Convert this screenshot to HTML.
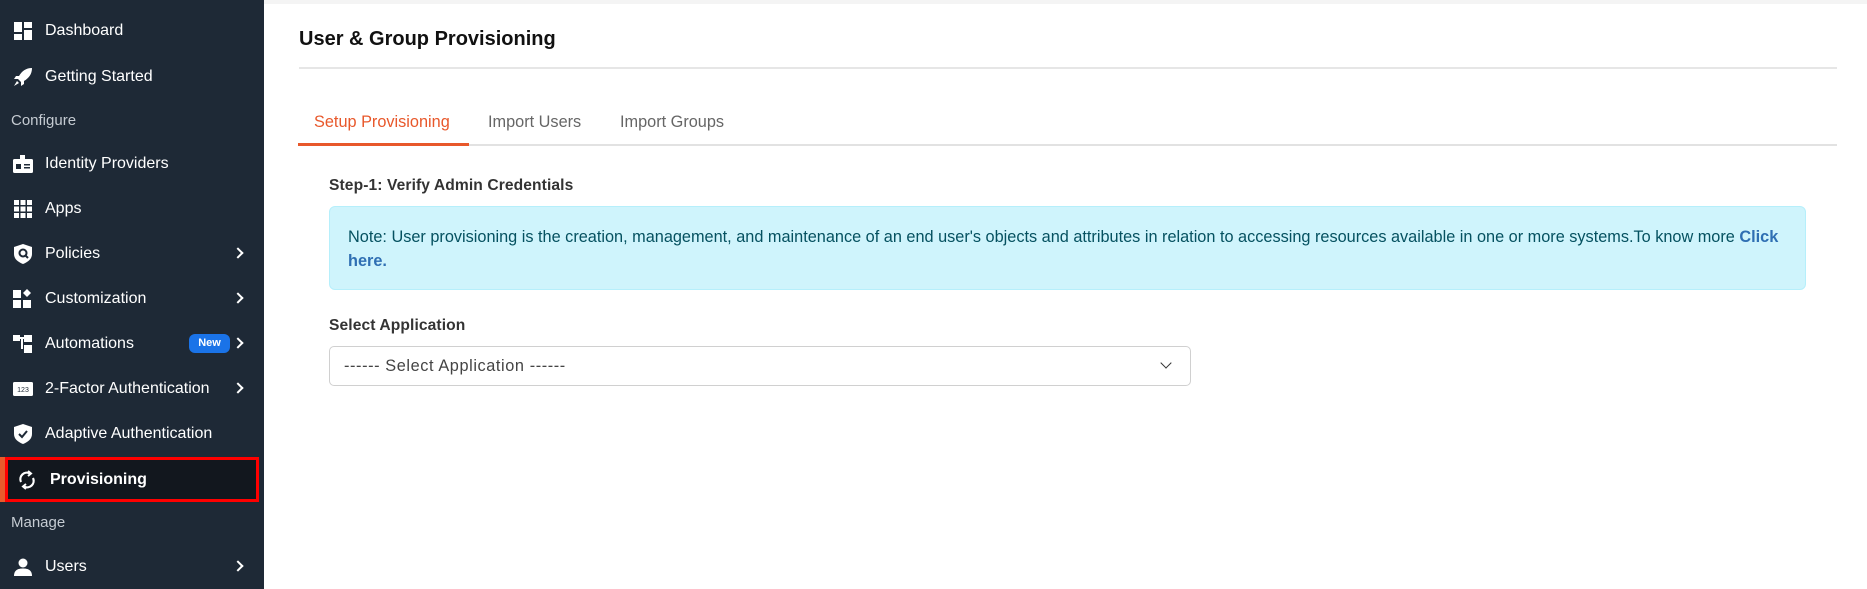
<!DOCTYPE html>
<html><head><meta charset="utf-8"><style>
*{margin:0;padding:0;box-sizing:border-box}
body{width:1867px;height:589px;overflow:hidden;background:#fff;font-family:"Liberation Sans",sans-serif;position:relative}
.sb{position:absolute;left:0;top:0;width:264px;height:589px;background:#1e2936}
.it{position:absolute;left:0;width:264px;height:45px;display:flex;align-items:center;color:#fff;font-size:16px}
.it .ic{position:absolute;left:13px;width:20px;height:20px;display:flex;align-items:center;justify-content:center}
.it .tx{position:absolute;left:45px}
.it .ch{position:absolute;left:234px;border-right:2.5px solid #fff;border-top:2.5px solid #fff;transform:rotate(45deg);width:8px;height:8px;top:18px}
.sec{position:absolute;left:11px;color:#c5cbd2;font-size:15px}
.main{position:absolute;left:264px;top:0;right:0;height:589px}
</style></head><body>
<div class="sb">
 <div class="it" style="top:8px"><span class="ic"><svg width="18" height="18" viewBox="0 0 18 18" fill="#fff"><rect x="0" y="0" width="8" height="10"/><rect x="10" y="0" width="8" height="6"/><rect x="0" y="12" width="8" height="6"/><rect x="10" y="8" width="8" height="10"/></svg></span><span class="tx">Dashboard</span></div>
 <div class="it" style="top:54px"><span class="ic"><svg width="20" height="20" viewBox="0 0 20 20" fill="#fff"><path d="M19 1C13 1 9 4 6 9L3 9 1 12 5 12 8 15 8 19 11 17 11 14C16 11 19 7 19 1Z"/><path d="M4 14 1 19 6 16Z"/></svg></span><span class="tx">Getting Started</span></div>
 <div class="sec" style="top:112px">Configure</div>
 <div class="it" style="top:141px"><span class="ic"><svg width="20" height="20" viewBox="0 0 20 20"><rect x="0" y="5" width="20" height="14" rx="1.5" fill="#fff"/><rect x="7" y="1" width="5" height="6" fill="#fff"/><rect x="3" y="10" width="5" height="5" fill="#1e2936"/><rect x="11" y="10" width="6" height="1.5" fill="#1e2936"/><rect x="11" y="13" width="6" height="1.5" fill="#1e2936"/></svg></span><span class="tx">Identity Providers</span></div>
 <div class="it" style="top:186px"><span class="ic"><svg width="18" height="18" viewBox="0 0 18 18" fill="#fff"><rect x="0" y="0" width="5" height="5"/><rect x="6.5" y="0" width="5" height="5"/><rect x="13" y="0" width="5" height="5"/><rect x="0" y="6.5" width="5" height="5"/><rect x="6.5" y="6.5" width="5" height="5"/><rect x="13" y="6.5" width="5" height="5"/><rect x="0" y="13" width="5" height="5"/><rect x="6.5" y="13" width="5" height="5"/><rect x="13" y="13" width="5" height="5"/></svg></span><span class="tx">Apps</span></div>
 <div class="it" style="top:231px"><span class="ic"><svg width="18" height="20" viewBox="0 0 18 20"><path d="M9 0 18 3V10C18 15 14 18 9 20 4 18 0 15 0 10V3Z" fill="#fff"/><circle cx="9" cy="9" r="3.5" fill="none" stroke="#1e2936" stroke-width="2"/><path d="M11 11 14 14" stroke="#1e2936" stroke-width="2"/></svg></span><span class="tx">Policies</span><span class="ch"></span></div>
 <div class="it" style="top:276px"><span class="ic"><svg width="20" height="20" viewBox="0 0 20 20" fill="#fff"><rect x="0" y="1" width="8" height="8"/><rect x="0" y="11" width="8" height="8"/><rect x="10" y="11" width="8" height="8"/><path d="M14 0 18 4 14 8 10 4Z"/></svg></span><span class="tx">Customization</span><span class="ch"></span></div>
 <div class="it" style="top:321px"><span class="ic"><svg width="20" height="20" viewBox="0 0 20 20" fill="#fff"><rect x="0" y="1" width="7" height="6"/><rect x="11" y="1" width="8" height="7"/><rect x="11" y="11" width="8" height="8"/><rect x="6" y="3" width="6" height="2"/><rect x="8" y="3" width="2" height="12"/></svg></span><span class="tx">Automations</span><span style="position:absolute;left:189px;top:13px;width:41px;height:19px;background:#1a73e8;border-radius:6px;color:#fff;font-size:11px;font-weight:bold;text-align:center;line-height:19px">New</span><span class="ch"></span></div>
 <div class="it" style="top:366px"><span class="ic"><svg width="20" height="16" viewBox="0 0 20 16"><rect x="0" y="1" width="20" height="14" rx="1.5" fill="#fff"/><text x="10" y="11" font-size="7" text-anchor="middle" fill="#1e2936" font-family="Liberation Sans">123</text></svg></span><span class="tx">2-Factor Authentication</span><span class="ch"></span></div>
 <div class="it" style="top:411px"><span class="ic"><svg width="18" height="20" viewBox="0 0 18 20"><path d="M9 0 18 3V10C18 15 14 18 9 20 4 18 0 15 0 10V3Z" fill="#fff"/><path d="M5 10 8 13 13 7" fill="none" stroke="#1e2936" stroke-width="2"/></svg></span><span class="tx">Adaptive Authentication</span></div>
 <div style="position:absolute;left:0;top:457px;width:5px;height:45px;background:#ea5a2b"></div>
 <div style="position:absolute;left:5px;top:457px;width:254px;height:45px;background:#12171e;border:3px solid #f00"></div>
 <div class="it" style="top:457px"><span class="ic" style="left:17px"><svg width="18" height="20" viewBox="0 0 18 20" fill="none" stroke="#fff" stroke-width="2.2"><path d="M3 12A6.5 6.5 0 0 1 12 3.5"/><path d="M15 8A6.5 6.5 0 0 1 6 16.5"/><path d="M10 1 13 3.5 10 6" stroke-width="2"/><path d="M8 14 5 16.5 8 19" stroke-width="2"/></svg></span><span class="tx" style="left:50px;font-weight:bold">Provisioning</span></div>
 <div class="sec" style="top:514px">Manage</div>
 <div class="it" style="top:544px"><span class="ic"><svg width="18" height="18" viewBox="0 0 18 18" fill="#fff"><circle cx="9" cy="5" r="4.5"/><path d="M0 18C0 12 4 10.5 9 10.5S18 12 18 18Z"/></svg></span><span class="tx">Users</span><span class="ch"></span></div>
</div>
<div class="main">
 <div style="position:absolute;left:0;top:0;right:0;height:4px;background:#f4f4f4"></div>
 <div style="position:absolute;left:35px;top:28px;font-size:20px;font-weight:bold;color:#111">User &amp; Group Provisioning</div>
 <div style="position:absolute;left:35px;top:67px;width:1538px;height:2px;background:#e6e6e6"></div>
 <div style="position:absolute;left:50px;top:113px;font-size:16.3px;color:#e8582b">Setup Provisioning</div>
 <div style="position:absolute;left:224px;top:113px;font-size:16.3px;color:#666">Import Users</div>
 <div style="position:absolute;left:356px;top:113px;font-size:16.3px;color:#666">Import Groups</div>
 <div style="position:absolute;left:34px;top:144px;width:1539px;height:2px;background:#e2e2e2"></div>
 <div style="position:absolute;left:34px;top:143px;width:171px;height:3px;background:#e8582b"></div>
 <div style="position:absolute;left:65px;top:177px;font-size:15.6px;font-weight:bold;color:#333;letter-spacing:0.1px">Step-1: Verify Admin Credentials</div>
 <div style="position:absolute;left:65px;top:206px;width:1477px;height:84px;background:#cff4fc;border:1px solid #b6effb;border-radius:6px;padding:18px 18px 0 18px;font-size:16.3px;line-height:24px;color:#055160;white-space:nowrap">Note: User provisioning is the creation, management, and maintenance of an end user's objects and attributes in relation to accessing resources available in one or more systems.To know more <b style="color:#2f6fb3">Click</b><br><b style="color:#2f6fb3">here.</b></div>
 <div style="position:absolute;left:65px;top:317px;font-size:15.6px;font-weight:bold;color:#333;letter-spacing:0.1px">Select Application</div>
 <div style="position:absolute;left:65px;top:346px;width:862px;height:40px;border:1px solid #d0d0d0;border-radius:5px;font-size:16.3px;color:#444;line-height:38px;padding-left:14px;letter-spacing:0.6px">------ Select Application ------
  <span style="position:absolute;right:20px;top:12px;width:8px;height:8px;border-right:1.5px solid #333;border-bottom:1.5px solid #333;transform:rotate(45deg)"></span></div>
</div>
</body></html>
